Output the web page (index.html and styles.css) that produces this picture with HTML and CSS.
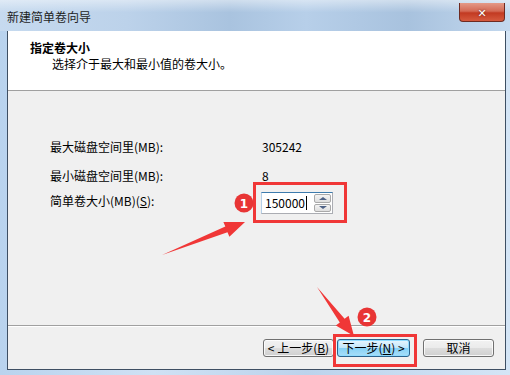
FILE: index.html
```html
<!DOCTYPE html>
<html lang="zh-CN">

<head>
    <meta charset="UTF-8">
    <title>新建简单卷向导</title>
    <link rel="stylesheet" href="styles.css">
</head>

<body>
    <div class="window">
        <!-- barra del titolo -->
        <div class="titlebar">
            <span class="title">新建简单卷向导</span>
            <div class="close-btn">&#x2715;</div>
        </div>

        <div class="client">
            <div class="header">
                <div class="header-title">指定卷大小</div>
                <div class="header-sub">选择介于最大和最小值的卷大小。</div>
            </div>

            <div class="content">
                <div class="row row-first">
                    <span class="label">最大磁盘空间里(MB):</span>
                    <span class="value">305242</span>
                </div>
                <div class="row row-second">
                    <span class="label">最小磁盘空间里(MB):</span>
                    <span class="value">8</span>
                </div>
                <div class="row row-third">
                    <span class="label">简单卷大小(MB)(<u>S</u>):</span>
                    <div class="spinbox">
                        <div class="spin-input">150000<span class="caret"></span></div>
                        <div class="spin-buttons">
                            <div class="spin-btn"><span class="tri-up"></span></div>
                            <div class="spin-btn"><span class="tri-down"></span></div>
                        </div>
                    </div>
                </div>
            </div>

            <div class="footer">
                <button class="btn">&lt; 上一步(<u>B</u>)</button>
                <button class="btn btn-default">下一步(<u>N</u>) &gt;</button>
                <button class="btn btn-cancel">取消</button>
            </div>
        </div>
    </div>

    <!-- annotazioni sopra lo screenshot -->
    <svg class="marks" width="510" height="375" viewBox="0 0 510 375">
        <rect x="254.5" y="183.5" width="91" height="38" fill="none" stroke="#f03737" stroke-width="3" />
        <rect x="334.5" y="335.5" width="81" height="30" fill="none" stroke="#f03737" stroke-width="3" />
        <polygon points="162,255 227.5,232.2 229.4,236.8 245,222 223.4,222 225.3,226.6" fill="#f03737" />
        <polygon points="317,287 339.8,322.4 335.8,325.4 354,336 348.6,315.8 344.6,318.8" fill="#f03737" />
        <circle cx="244" cy="203" r="9.5" fill="#e83535" />
        <text x="244" y="207.5" class="num">1</text>
        <circle cx="367" cy="317" r="9.5" fill="#e83535" />
        <text x="367" y="321.5" class="num">2</text>
    </svg>
</body>

</html>
```

FILE: styles.css
```css
body {
    margin: 0;
    width: 510px;
    height: 375px;
    overflow: hidden;
    position: relative;
    font-family: "Noto Sans CJK SC", "DejaVu Sans", sans-serif;
    font-size: 12px;
    color: #000;
    background: linear-gradient(90deg, #b9d3ee 0%, #cfe1f4 30%, #bcd3ec 60%, #d4e5f6 100%);
}

.window {
    display: flex;
    flex-direction: column;
    height: 375px;
}

.titlebar {
    height: 31px;
    display: flex;
    align-items: flex-start;
    background:
        linear-gradient(180deg, rgba(255, 255, 255, 0.45) 0%, rgba(255, 255, 255, 0) 40%),
        linear-gradient(90deg, #c6daef 0%, #bcd2ea 25%, #a9c3df 45%, #b7cfe9 60%, #a8c2de 80%, #c3d8ee 100%);
}

.title {
    margin: 9px 0 0 7px;
    line-height: 16px;
    font-size: 12px;
    color: #1e1e1e;
}

.close-btn {
    margin: 3px 5px 0 auto;
    width: 44px;
    height: 18px;
    border: 1px solid #6e2a20;
    border-top: none;
    border-radius: 0 0 4px 4px;
    background: linear-gradient(180deg, #e49a88 0%, #d46a55 45%, #c23a22 55%, #d65a3e 100%);
    color: #fff;
    font-size: 11px;
    font-weight: bold;
    line-height: 18px;
    text-align: center;
    text-shadow: 0 0 2px #5a1a10;
}

.client {
    margin: 0 4px 0 7px;
    height: 338px;
    border: 1px solid #3e4f63;
    border-top: none;
    background-color: #f0f0f0;
    display: flex;
    flex-direction: column;
}

.header {
    height: 59px;
    background-color: #fff;
    border-bottom: 1px solid #a0a0a0;
    box-sizing: content-box;
}

.header-title {
    margin: 10px 0 0 22px;
    font-weight: bold;
    line-height: 14px;
}

.header-sub {
    margin: 2px 0 0 44px;
    line-height: 14px;
}

.content {
    height: 235px;
    padding-left: 42px;
    border-bottom: 1px solid #a0a0a0;
    box-sizing: border-box;
}

.row {
    display: flex;
    align-items: center;
    height: 22px;
}

.row-first {
    margin-top: 44px;
}

.row-second {
    margin-top: 7px;
}

.row-third {
    margin-top: 5px;
}

.label {
    width: 211px;
}

.row-third .label {
    margin-top: -3px;
}

.value {
    padding-left: 1px;
}

.spinbox {
    display: flex;
    width: 72px;
    height: 22px;
    box-sizing: border-box;
    border: 1px solid #abadb3;
    border-top-color: #3d7bad;
    border-left-color: #b5cfe7;
    background-color: #fff;
    margin-top: 2px;
}

.spin-input {
    flex: 1;
    padding-left: 3px;
    line-height: 20px;
    display: flex;
    align-items: center;
}

.caret {
    width: 1px;
    height: 14px;
    background-color: #000;
    margin-left: 1px;
}

.spin-buttons {
    width: 17px;
    display: flex;
    flex-direction: column;
    gap: 1px;
    padding: 1px 1px 1px 0;
}

.spin-btn {
    flex: 1;
    border: 1px solid #a9a9a9;
    border-radius: 2px;
    background: linear-gradient(180deg, #f4f4f4, #dedede);
    display: flex;
    align-items: center;
    justify-content: center;
}

.tri-up {
    border-left: 4px solid transparent;
    border-right: 4px solid transparent;
    border-bottom: 3px solid #4d6185;
}

.tri-down {
    border-left: 4px solid transparent;
    border-right: 4px solid transparent;
    border-top: 3px solid #4d6185;
}

.footer {
    flex: 1;
    border-top: 1px solid #fff;
    display: flex;
    justify-content: flex-end;
    align-items: flex-start;
    padding: 12px 11px 0 0;
}

.btn {
    height: 18px;
    width: 71px;
    padding: 0;
    font-family: inherit;
    font-size: 12px;
    line-height: 16px;
    color: #000;
    border: 1px solid #707070;
    border-radius: 3px;
    background: linear-gradient(180deg, #f2f2f2 0%, #ebebeb 48%, #dddddd 52%, #cfcfcf 100%);
    box-shadow: inset 0 0 0 1px rgba(255, 255, 255, 0.8);
}

.btn-default {
    width: 73px;
    margin-left: 3px;
    border-color: #2c628b;
    background: linear-gradient(180deg, #e8f6fd 0%, #c2e7fa 48%, #86d2f6 52%, #a9def8 100%);
    box-shadow: inset 0 0 0 1px #8fdcff;
}

.btn-cancel {
    margin-left: 13px;
}

.marks {
    position: absolute;
    left: 0;
    top: 0;
    pointer-events: none;
}

.num {
    fill: #fff;
    font-family: "DejaVu Sans", sans-serif;
    font-size: 12px;
    font-weight: bold;
    text-anchor: middle;
}
```
